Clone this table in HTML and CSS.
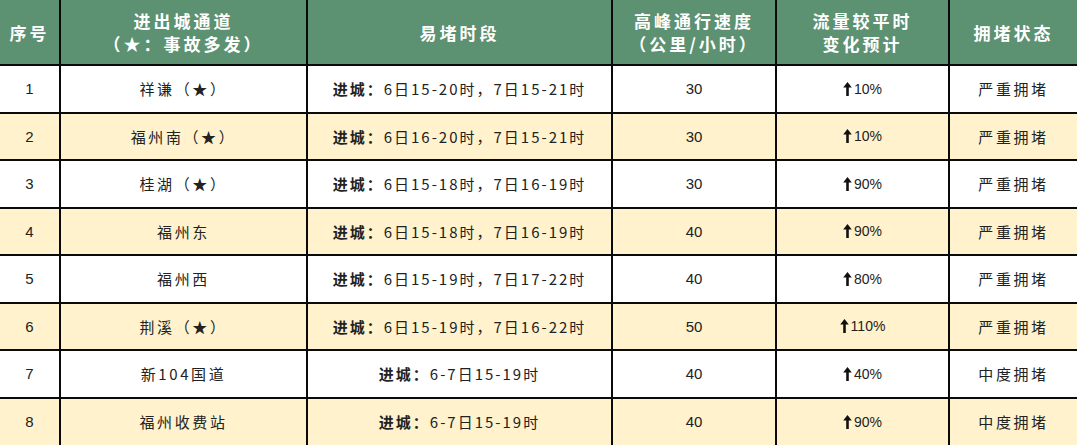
FILE: index.html
```html
<!DOCTYPE html>
<html lang="zh">
<head>
<meta charset="utf-8">
<link rel="stylesheet" href="styles.css">
</head>
<body>
<table class="tbl">
  <colgroup>
    <col class="c1"><col class="c2"><col class="c3"><col class="c4"><col class="c5"><col class="c6">
  </colgroup>
  <thead>
    <tr class="head">
      <th>序号</th>
      <th>进出城通道<br>（★：事故多发）</th>
      <th>易堵时段</th>
      <th>高峰通行速度<br>（公里/小时）</th>
      <th>流量较平时<br>变化预计</th>
      <th>拥堵状态</th>
    </tr>
  </thead>
  <tbody>
    <tr><td class="num">1</td><td>祥谦（★）</td><td class="time"><b>进城：</b>6日15-20时，7日15-21时</td><td class="num">30</td><td class="pct"><svg class="up" viewBox="0 0 8 13"><path d="M4 0 L8 5 H5.2 V13 H2.8 V5 H0 Z"/></svg>10%</td><td>严重拥堵</td></tr>
    <tr class="alt"><td class="num">2</td><td>福州南（★）</td><td class="time"><b>进城：</b>6日16-20时，7日15-21时</td><td class="num">30</td><td class="pct"><svg class="up" viewBox="0 0 8 13"><path d="M4 0 L8 5 H5.2 V13 H2.8 V5 H0 Z"/></svg>10%</td><td>严重拥堵</td></tr>
    <tr><td class="num">3</td><td>桂湖（★）</td><td class="time"><b>进城：</b>6日15-18时，7日16-19时</td><td class="num">30</td><td class="pct"><svg class="up" viewBox="0 0 8 13"><path d="M4 0 L8 5 H5.2 V13 H2.8 V5 H0 Z"/></svg>90%</td><td>严重拥堵</td></tr>
    <tr class="alt"><td class="num">4</td><td>福州东</td><td class="time"><b>进城：</b>6日15-18时，7日16-19时</td><td class="num">40</td><td class="pct"><svg class="up" viewBox="0 0 8 13"><path d="M4 0 L8 5 H5.2 V13 H2.8 V5 H0 Z"/></svg>90%</td><td>严重拥堵</td></tr>
    <tr><td class="num">5</td><td>福州西</td><td class="time"><b>进城：</b>6日15-19时，7日17-22时</td><td class="num">40</td><td class="pct"><svg class="up" viewBox="0 0 8 13"><path d="M4 0 L8 5 H5.2 V13 H2.8 V5 H0 Z"/></svg>80%</td><td>严重拥堵</td></tr>
    <tr class="alt"><td class="num">6</td><td>荆溪（★）</td><td class="time"><b>进城：</b>6日15-19时，7日16-22时</td><td class="num">50</td><td class="pct"><svg class="up" viewBox="0 0 8 13"><path d="M4 0 L8 5 H5.2 V13 H2.8 V5 H0 Z"/></svg>110%</td><td>严重拥堵</td></tr>
    <tr><td class="num">7</td><td>新104国道</td><td class="time"><b>进城：</b>6-7日15-19时</td><td class="num">40</td><td class="pct"><svg class="up" viewBox="0 0 8 13"><path d="M4 0 L8 5 H5.2 V13 H2.8 V5 H0 Z"/></svg>40%</td><td>中度拥堵</td></tr>
    <tr class="alt"><td class="num">8</td><td>福州收费站</td><td class="time"><b>进城：</b>6-7日15-19时</td><td class="num">40</td><td class="pct"><svg class="up" viewBox="0 0 8 13"><path d="M4 0 L8 5 H5.2 V13 H2.8 V5 H0 Z"/></svg>90%</td><td>中度拥堵</td></tr>
  </tbody>
</table>
</body>
</html>
```
FILE: styles.css
```css
html, body {
  margin: 0;
  padding: 0;
  background: #ffffff;
}
body {
  font-family: "Liberation Sans", "Noto Sans CJK SC", sans-serif;
  color: #222222;
}
.tbl {
  width: 1077px;
  border-collapse: collapse;
  table-layout: fixed;
  border-style: hidden;
}
.c1 { width: 60px; }
.c2 { width: 247px; }
.c3 { width: 305px; }
.c4 { width: 164px; }
.c5 { width: 173px; }
.c6 { width: 128px; }
.tbl th, .tbl td {
  border: 2px solid #0a0a0a;
  text-align: center;
  vertical-align: middle;
  padding: 0;
}
.head {
  height: 65px;
  background: #5c9172;
}
.head th {
  color: #ffffff;
  font-family: "Noto Sans CJK SC", sans-serif;
  font-weight: 700;
  font-size: 17px;
  letter-spacing: 3px;
  line-height: 23px;
}
.tbl tbody tr {
  height: 47.5px;
}
.tbl tbody tr.alt {
  background: #fff2cc;
}
.tbl td {
  font-family: "Noto Sans CJK SC", sans-serif;
  font-size: 15px;
  letter-spacing: 2.6px;
}
.tbl td.time {
  letter-spacing: 2px;
}
.tbl td b {
  font-weight: 700;
}
.tbl td.num {
  font-family: "Liberation Sans", sans-serif;
  letter-spacing: 0;
}
.tbl td.pct {
  font-family: "Liberation Sans", sans-serif;
  font-size: 14px;
  letter-spacing: 0;
}
.up {
  width: 9px;
  height: 14px;
  margin-right: 2px;
  vertical-align: -2px;
  fill: #111111;
}
```
